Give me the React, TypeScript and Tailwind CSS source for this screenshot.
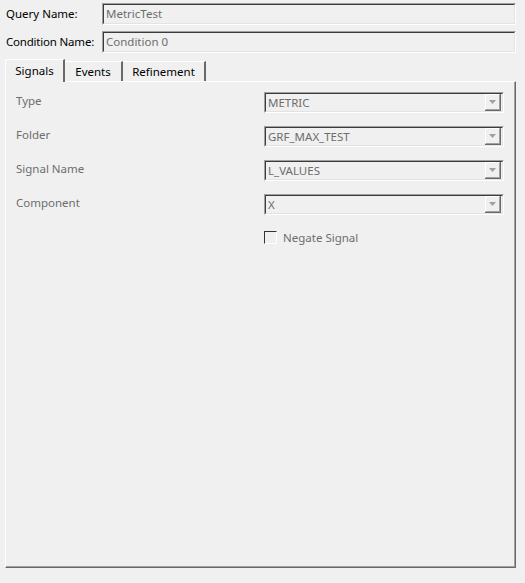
import React from "react";

const font = { fontFamily: '"Noto Sans", "Open Sans", sans-serif' };

function Sunken({ children, className = "" }: { children?: React.ReactNode; className?: string }) {
  return (
    <div className={`border-t border-l border-t-[#a0a0a0] border-l-[#a0a0a0] border-r border-b border-r-white border-b-white ${className}`}>
      <div className="h-full border-t border-l border-t-[#3c3c3c] border-l-[#3c3c3c] border-r border-b border-r-[#e3e3e3] border-b-[#e3e3e3] flex items-center">
        {children}
      </div>
    </div>
  );
}

function Arrow() {
  return (
    <div className="w-[16px] h-[17px] border-r border-b border-r-[#696969] border-b-[#696969] mr-[1px]">
      <div className="h-full border-t border-l border-t-white border-l-white border-r border-b border-r-[#a0a0a0] border-b-[#a0a0a0] flex items-center justify-center">
        <svg width="7" height="5" viewBox="0 0 7 5">
          <path d="M0 0h7L3.5 4z" fill="#a0a0a0" />
        </svg>
      </div>
    </div>
  );
}

function Combo({ value }: { value: string }) {
  return (
    <Sunken className="h-[21px] w-[240px]">
      <span className="flex-1 pl-[2px] text-[#6d6d6d] leading-none">{value}</span>
      <Arrow />
    </Sunken>
  );
}

const rows = [
  ["Type", "METRIC"],
  ["Folder", "GRF_MAX_TEST"],
  ["Signal Name", "L_VALUES"],
  ["Component", "X"],
];

export default function App() {
  return (
    <div className="w-[525px] h-[583px] bg-[#f0f0f0] text-[11.5px] text-black flex flex-col" style={font}>
      <div className="flex items-center mt-[3px] h-[22px]">
        <span className="w-[102px] pl-[6px]">Query Name:</span>
        <Sunken className="flex-1 mr-[9px] h-[22px]">
          <span className="pl-[2px] text-[#6d6d6d]">MetricTest</span>
        </Sunken>
      </div>
      <div className="flex items-center mt-[6px] h-[22px]">
        <span className="w-[102px] pl-[6px] tracking-[-0.2px]">Condition Name:</span>
        <Sunken className="flex-1 mr-[9px] h-[22px]">
          <span className="pl-[2px] text-[#6d6d6d]">Condition 0</span>
        </Sunken>
      </div>

      <div className="flex items-end ml-[5px] mt-[6px] h-[22px] relative z-10">
        <div className="h-[23px] w-[60px] -mb-[1px] bg-[#f0f0f0] border-t border-l border-white border-r-2 border-r-[#696969] flex items-center justify-center">
          Signals
        </div>
        <div className="h-[20px] w-[58px] border-t border-t-white border-r-2 border-r-[#696969] flex items-center justify-center">
          Events
        </div>
        <div className="h-[20px] w-[83px] border-t border-t-white border-r-2 border-r-[#696969] flex items-center justify-center">
          Refinement
        </div>
      </div>

      <div className="ml-[5px] mr-[9px] h-[487px] border-t border-l border-white border-r border-b border-r-[#696969] border-b-[#696969]">
        <div className="h-full border-r border-b border-r-[#a0a0a0] border-b-[#a0a0a0] pt-[10px] pl-[10px] flex flex-col gap-[13px]">
          {rows.map(([label, value]) => (
            <div key={label} className="flex items-start">
              <span className="w-[248px] text-[#6d6d6d] leading-[18px]">{label}</span>
              <Combo value={value} />
            </div>
          ))}
          <div className="flex items-center ml-[248px] mt-[1px]">
            <div className="w-[13px] h-[13px] border-t border-l border-t-[#333] border-l-[#333] border-r border-b border-r-white border-b-white" />
            <span className="ml-[6px] text-[#6d6d6d]">Negate Signal</span>
          </div>
        </div>
      </div>
    </div>
  );
}
